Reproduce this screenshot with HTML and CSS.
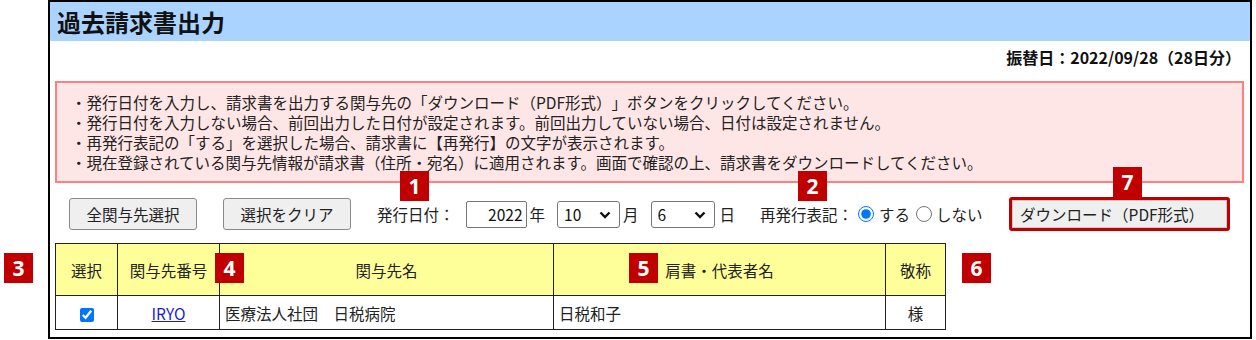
FILE: index.html
```html
<!DOCTYPE html>
<html lang="ja">
<head>
    <meta charset="UTF-8">
    <title>過去請求書出力</title>
    <link rel="stylesheet" href="styles.css">
</head>
<body>

<div class="page">
    <div class="frame">
        <!-- Title bar -->
        <h1 class="title">過去請求書出力</h1>

        <div class="content">
            <p class="transfer">振替日：2022/09/28（28日分）</p>

            <!-- Notice box -->
            <div class="notice">
                <p>・発行日付を入力し、請求書を出力する関与先の「ダウンロード（PDF形式）」ボタンをクリックしてください。</p>
                <p>・発行日付を入力しない場合、前回出力した日付が設定されます。前回出力していない場合、日付は設定されません。</p>
                <p>・再発行表記の「する」を選択した場合、請求書に【再発行】の文字が表示されます。</p>
                <p>・現在登録されている関与先情報が請求書（住所・宛名）に適用されます。画面で確認の上、請求書をダウンロードしてください。</p>
            </div>

            <!-- Controls -->
            <div class="controls">
                <button class="btn btn-all">全関与先選択</button>
                <button class="btn btn-clear">選択をクリア</button>
                <span class="label issue-label">発行日付：</span>
                <input class="year" type="text" value="2022">
                <span class="unit">年</span>
                <span class="select-wrap month">
                    <select><option>10</option></select>
                    <svg class="chevron" width="12" height="8" viewBox="0 0 12 8"><path d="M1.5 1.5 L6 6 L10.5 1.5" fill="none" stroke="#111" stroke-width="2.4"/></svg>
                </span>
                <span class="unit">月</span>
                <span class="select-wrap day">
                    <select><option>6</option></select>
                    <svg class="chevron" width="12" height="8" viewBox="0 0 12 8"><path d="M1.5 1.5 L6 6 L10.5 1.5" fill="none" stroke="#111" stroke-width="2.4"/></svg>
                </span>
                <span class="unit unit-day">日</span>
                <span class="label reissue-label">再発行表記：</span>
                <label class="radio radio-yes"><input type="radio" name="reissue" checked><span>する</span></label>
                <label class="radio radio-no"><input type="radio" name="reissue"><span>しない</span></label>
                <span class="highlight"><button class="btn btn-download">ダウンロード（PDF形式）</button></span>
            </div>

            <!-- Client table -->
            <table class="clients">
                <colgroup>
                    <col class="col-check">
                    <col class="col-code">
                    <col class="col-name">
                    <col class="col-rep">
                    <col class="col-title">
                </colgroup>
                <thead>
                    <tr>
                        <th>選択</th>
                        <th>関与先番号</th>
                        <th>関与先名</th>
                        <th>肩書・代表者名</th>
                        <th>敬称</th>
                    </tr>
                </thead>
                <tbody>
                    <tr>
                        <td class="center"><input type="checkbox" checked></td>
                        <td class="center"><a href="#">IRYO</a></td>
                        <td>医療法人社団　日税病院</td>
                        <td>日税和子</td>
                        <td class="center">様</td>
                    </tr>
                </tbody>
            </table>
        </div>
    </div>

    <!-- Annotation badges -->
    <span class="badge badge-1">1</span>
    <span class="badge badge-2">2</span>
    <span class="badge badge-3">3</span>
    <span class="badge badge-4">4</span>
    <span class="badge badge-5">5</span>
    <span class="badge badge-6">6</span>
    <span class="badge badge-7">7</span>
</div>

</body>
</html>
```

FILE: styles.css
```css
/* Reset */
* {
    margin: 0;
    padding: 0;
    box-sizing: border-box;
}

body {
    font-family: "Noto Sans CJK JP", "Noto Sans", sans-serif;
    font-size: 15.5px;
    color: #222;
    background-color: #fff;
    text-spacing-trim: space-all;
}

/* Page canvas */
.page {
    position: relative;
    width: 1256px;
    height: 340px;
    padding-left: 48px;
}

/* Outer frame */
.frame {
    width: 1204px;
    height: 339px;
    border: 2px solid #000;
}

.title {
    height: 39px;
    line-height: 39px;
    padding-left: 7px;
    font-size: 24px;
    font-weight: bold;
    color: #111;
    background-color: #aad4ff;
}

.content {
    padding: 0 6px 0 5px;
}

.transfer {
    margin-top: 6px;
    padding-right: 3px;
    line-height: 20px;
    font-size: 16px;
    font-weight: bold;
    text-align: right;
    color: #111;
}

/* Notice */
.notice {
    margin-top: 14px;
    padding: 9px 14px;
    line-height: 20px;
    background-color: #ffe6e6;
    border: 2px solid #ff8080;
}

/* Controls row */
.controls {
    display: flex;
    align-items: center;
    height: 34px;
    margin-top: 14px;
}

.btn {
    font-family: inherit;
    font-size: 15.5px;
    color: #222;
    background-color: #efefef;
    border: 1px solid #8a8a8a;
    border-radius: 3px;
}

.btn-all,
.btn-clear {
    width: 128px;
    height: 32px;
}

.btn-all {
    margin-left: 14px;
}

.btn-clear {
    margin-left: 26px;
}

.label {
    line-height: 20px;
}

.issue-label {
    margin-left: 26px;
}

.year {
    width: 61px;
    height: 27px;
    margin-left: 11px;
    padding: 0 3px;
    font-family: inherit;
    font-size: 15.5px;
    text-align: right;
    color: #111;
    border: 1px solid #767676;
    border-radius: 2px;
}

.unit {
    margin-left: 3px;
}

.unit-day {
    margin-left: 5px;
}

/* Select with bold chevron */
.select-wrap {
    position: relative;
    display: flex;
    height: 27px;
    margin-left: 12px;
}

.select-wrap select {
    width: 100%;
    height: 27px;
    padding-left: 6px;
    font-family: inherit;
    font-size: 15.5px;
    color: #111;
    background-color: #fff;
    border: 1px solid #767676;
    border-radius: 3px;
    appearance: none;
}

.chevron {
    position: absolute;
    right: 9px;
    top: 10px;
    pointer-events: none;
}

.month {
    width: 63px;
}

.day {
    width: 64px;
}

.reissue-label {
    margin-left: 25px;
}

.radio {
    display: flex;
    align-items: center;
}

.radio input {
    width: 16px;
    height: 16px;
    margin: 0 5px 0 0;
}

.radio-yes {
    margin-left: 5px;
}

.radio-no {
    margin-left: 6px;
}

.radio-no input {
    margin-right: 4px;
}

.highlight {
    display: flex;
    margin-left: 26px;
    border: 3px solid #c00000;
    border-radius: 3px;
}

.btn-download {
    width: 215px;
    height: 28px;
    padding-right: 14px;
    border-color: #c8c8c8;
    border-radius: 0;
}

/* Table */
.clients {
    width: 890px;
    margin-top: 12px;
    table-layout: fixed;
    border-collapse: collapse;
}

.col-check { width: 62px; }
.col-code { width: 102px; }
.col-name { width: 334px; }
.col-rep { width: 332px; }
.col-title { width: 60px; }

.clients th,
.clients td {
    border: 1px solid #222;
    font-weight: normal;
}

.clients th {
    height: 52px;
    background-color: #ffff99;
}

.clients td {
    height: 34px;
    padding: 0 5px;
}

.clients td.center {
    text-align: center;
}

.clients input[type="checkbox"] {
    width: 14px;
    height: 14px;
    margin: 0;
    vertical-align: middle;
}

.clients a {
    color: #1a1adb;
}

/* Annotation badges */
.badge {
    position: absolute;
    width: 29px;
    height: 30px;
    line-height: 30px;
    font-family: "Noto Sans", sans-serif;
    font-size: 21px;
    font-weight: bold;
    text-align: center;
    color: #fff;
    background-color: #c00000;
}

.badge-1 { left: 400px; top: 171px; }
.badge-2 { left: 798px; top: 171px; }
.badge-3 { left: 4px; top: 253px; }
.badge-4 { left: 215px; top: 253px; }
.badge-5 { left: 629px; top: 253px; }
.badge-6 { left: 962px; top: 253px; }
.badge-7 { left: 1113px; top: 167px; }
```
